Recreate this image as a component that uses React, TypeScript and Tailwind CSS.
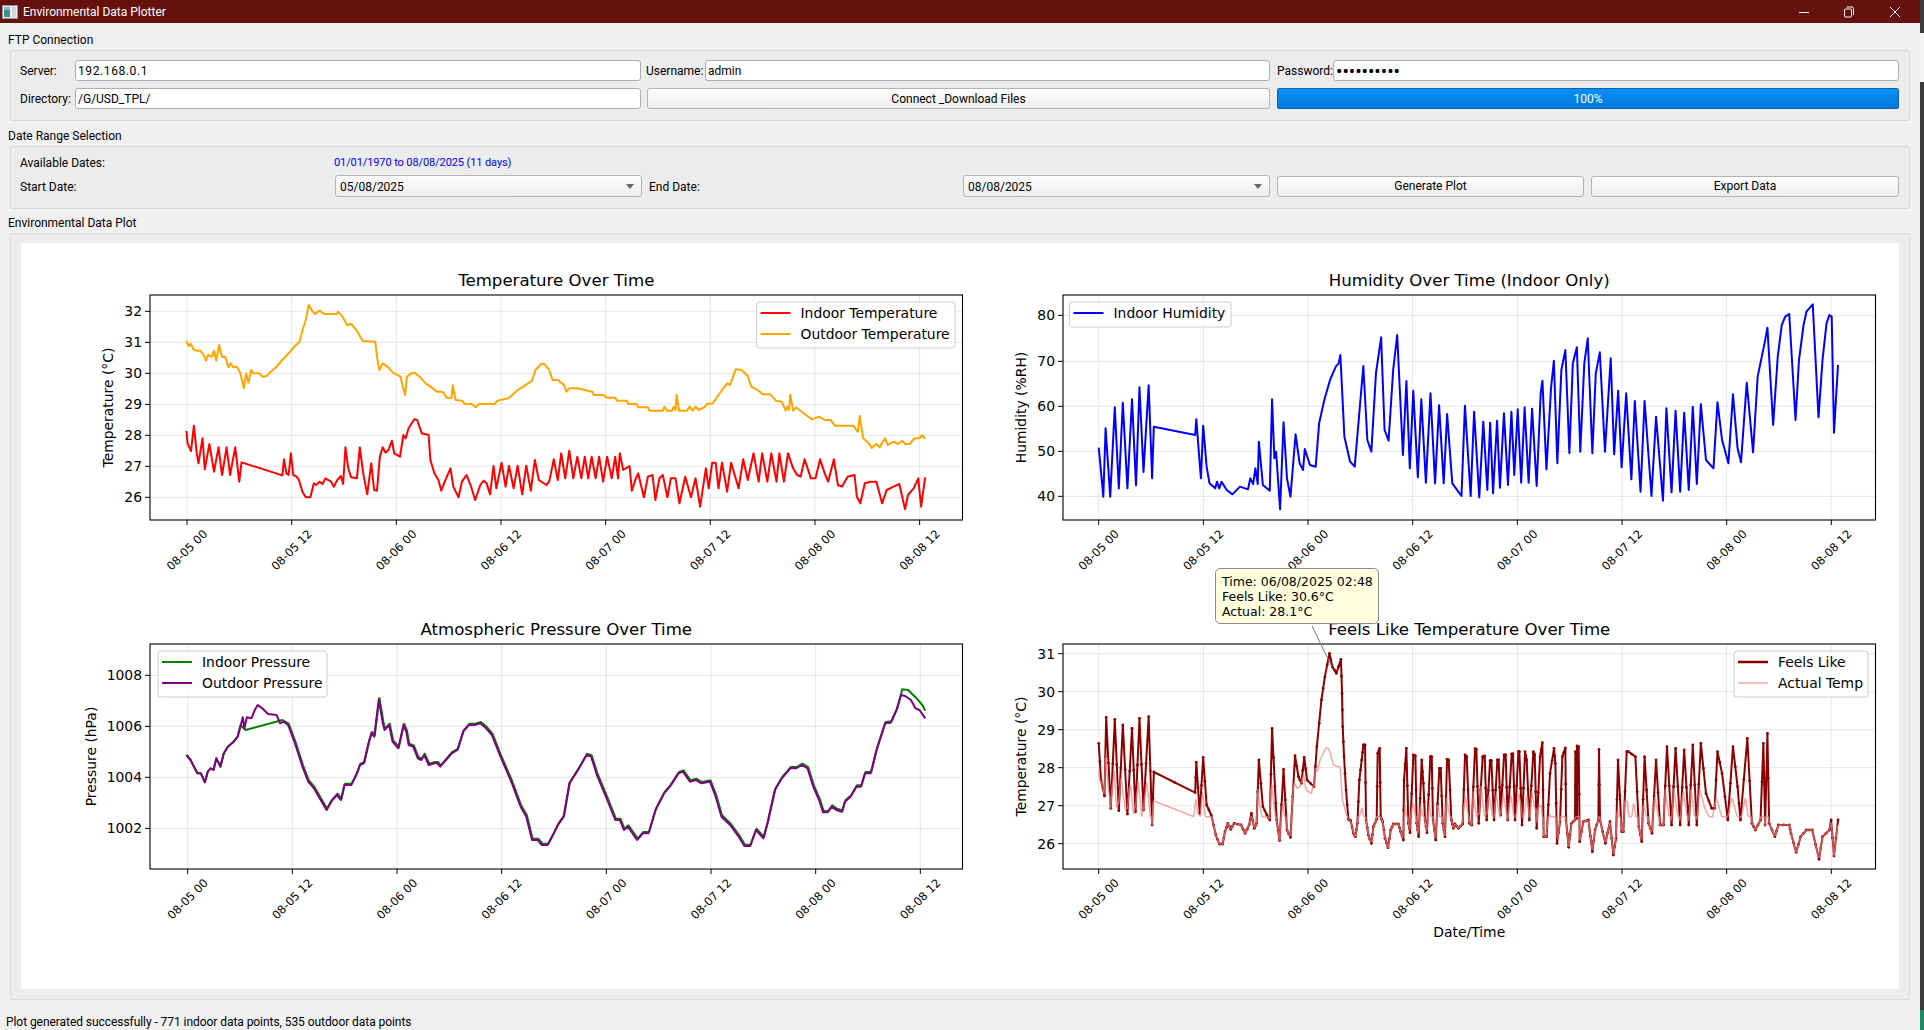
import React from 'react';

const px = 1568 / 900;

const OUTDOOR_TEMP = '168,243 172,258 176,252 180,268 185,272 192,272 198,285 202,302 206,285 212,290 216,272 220,302 225,255 230,290 236,292 241,322 245,310 250,322 256,320 262,340 268,385 272,340 276,368 281,330 285,340 295,340 300,350 308,348 315,335 325,320 335,300 345,282 355,262 365,245 372,200 376,180 381,134 386,150 392,162 400,152 408,162 430,162 432,155 440,170 448,195 455,192 465,212 475,243 497,245 500,290 504,330 510,310 518,320 528,338 541,350 545,380 549,405 552,350 560,340 566,338 575,352 585,370 595,382 604,395 614,395 622,414 630,414 632,376 637,420 648,422 653,432 665,432 672,442 678,432 705,432 710,422 730,414 745,390 755,380 770,362 776,330 786,312 792,312 800,330 806,360 815,360 826,375 830,395 835,385 850,385 875,395 878,405 895,405 900,413 915,413 918,422 935,422 938,432 952,432 955,442 972,442 975,452 998,452 1001,440 1005,452 1014,452 1017,440 1020,450 1022,404 1026,452 1040,452 1045,440 1050,452 1055,440 1060,450 1070,442 1075,432 1085,430 1095,405 1110,370 1115,375 1125,328 1135,330 1146,348 1152,380 1165,392 1172,403 1185,403 1195,422 1205,425 1212,452 1215,440 1218,450 1220,404 1225,452 1230,442 1245,462 1258,478 1270,470 1280,480 1290,480 1298,497 1330,497 1335,510 1338,515 1341,468 1347,535 1358,552 1362,564 1370,552 1376,562 1385,535 1390,555 1400,545 1408,552 1415,542 1420,552 1428,552 1436,535 1445,535 1450,525 1455,537';

const INDOOR_TEMP = '168,513 170,550 176,573 181,497 186,580 189,610 196,535 200,628 208,552 216,635 224,562 230,645 238,562 244,645 253,562 260,665 264,607 335,646 338,598 342,640 346,645 350,580 354,645 360,650 364,660 370,695 376,712 384,712 390,670 394,675 400,665 405,672 410,655 420,665 425,680 430,662 437,648 441,672 445,562 450,625 455,652 465,655 470,562 476,640 483,703 490,610 495,690 500,692 505,590 510,562 515,578 520,570 526,542 530,580 540,590 546,525 550,535 555,505 565,478 570,480 578,520 590,525 593,600 600,640 607,660 612,692 618,665 628,625 633,680 642,712 648,665 656,645 664,680 671,720 680,675 686,662 691,670 697,703 703,618 708,685 717,608 724,680 730,617 738,685 745,617 753,703 760,617 768,692 775,600 782,660 795,675 800,665 808,598 815,660 821,580 828,655 835,572 842,655 849,590 856,655 862,590 868,655 874,590 881,655 887,590 894,665 901,590 909,655 915,590 920,655 923,580 929,630 940,618 944,692 950,660 955,640 965,712 972,650 980,645 985,720 992,655 998,645 1006,712 1012,655 1020,655 1027,730 1037,650 1047,712 1055,655 1063,740 1073,625 1078,685 1084,608 1090,608 1095,685 1101,608 1110,695 1117,608 1130,685 1138,598 1146,660 1156,580 1165,665 1171,580 1180,665 1187,580 1196,665 1201,580 1209,665 1216,580 1225,625 1232,645 1238,650 1245,598 1256,655 1264,655 1272,598 1280,640 1286,665 1296,598 1303,675 1310,680 1320,650 1332,645 1336,710 1342,730 1350,670 1360,665 1370,665 1380,730 1388,690 1400,680 1410,672 1420,748 1425,705 1435,685 1443,655 1448,740 1455,652';

const HUMIDITY = '172,563 180,710 184,505 192,710 200,442 207,685 214,428 222,685 230,418 237,676 243,382 250,636 259,376 265,655 268,500 340,525 342,478 350,655 354,497 360,620 365,670 375,685 378,665 382,685 386,665 395,690 405,703 418,680 432,688 436,655 441,672 445,625 449,672 451,545 458,675 470,692 474,418 478,595 481,575 488,748 494,487 500,655 506,710 515,523 522,610 528,630 531,567 540,615 550,620 556,490 565,420 575,360 585,320 590,310 593,285 600,530 610,605 618,620 633,318 640,540 647,575 655,340 664,232 670,510 677,542 685,330 692,225 702,585 708,363 714,625 720,392 728,652 734,418 742,668 750,400 758,670 765,436 773,670 779,462 788,670 804,708 810,437 820,708 826,455 835,712 842,485 849,690 854,488 859,700 866,482 871,683 878,460 885,675 891,455 896,645 902,448 908,668 914,442 921,668 927,446 935,678 942,400 945,362 952,628 960,385 965,302 971,610 978,330 985,270 992,580 998,310 1005,262 1011,575 1018,310 1024,235 1032,580 1038,340 1045,277 1054,575 1064,295 1070,583 1077,392 1083,622 1091,400 1100,658 1106,423 1116,695 1123,423 1135,708 1143,470 1155,722 1161,445 1170,697 1177,452 1185,695 1192,458 1200,690 1207,440 1214,672 1221,433 1230,600 1243,625 1250,427 1258,540 1269,610 1277,403 1285,565 1291,607 1301,368 1312,577 1320,350 1332,250 1337,203 1347,495 1355,290 1362,195 1368,170 1375,162 1386,480 1392,300 1400,195 1405,155 1416,133 1426,472 1433,300 1440,190 1445,165 1449,170 1453,518 1460,315';

const PRESSURE_OUT = '203,435 210,450 216,470 222,490 228,490 235,517 240,485 245,475 250,480 255,445 262,470 268,430 275,410 285,395 292,380 297,350 301,322 304,355 308,322 316,325 322,300 327,285 335,295 345,312 360,315 366,340 372,335 380,345 392,400 405,470 415,515 425,535 435,565 447,600 455,575 465,555 472,570 478,525 490,525 500,490 505,465 512,460 520,400 525,370 530,380 538,268 545,340 548,360 556,345 562,395 572,415 581,345 586,365 590,405 598,410 606,445 612,450 617,435 625,465 635,460 640,460 645,470 655,450 665,430 675,420 685,365 695,345 705,345 715,340 725,355 735,375 750,440 770,520 785,590 795,620 805,690 815,690 822,705 832,705 840,680 850,645 860,620 870,520 885,480 900,435 908,440 918,495 935,565 950,630 958,630 965,660 972,650 988,690 998,670 1008,670 1020,600 1035,550 1045,530 1060,490 1068,485 1080,515 1090,510 1100,520 1115,515 1125,560 1135,620 1150,645 1165,680 1175,708 1185,708 1195,660 1208,685 1215,640 1228,540 1240,505 1255,475 1265,475 1275,465 1285,475 1295,530 1305,570 1312,607 1320,607 1327,590 1335,600 1345,605 1350,575 1360,560 1370,530 1378,530 1385,490 1395,490 1405,420 1420,340 1430,338 1440,300 1448,255 1455,258 1465,270 1473,295 1480,300 1490,325';

const FEELS_START = '172,550 176,660 182,708 185,472 193,745 200,478 207,752 214,495 222,762 230,505 236,755 243,475 250,750 259,470 265,795 268,636 340,698 342,607 348,760 354,592 360,735 368,765 376,825 382,852 388,852 392,815 397,790 402,808 408,790 420,795 427,820 434,795 438,760 443,805 447,790 451,600 458,740 465,765 470,780 474,505 479,680 482,780 487,842 494,628 500,810 506,832 514,587 520,650 525,670 530,592 535,660 547,680 552,560 560,420 566,350 574,280 579,320 586,340 594,298';

// traced from a closer crop, so it has its own scale
const FEELS_MID = '36,100 38,200 42,290 48,390 55,478 62,482 70,520 76,530 82,490 88,360 95,300 100,255 105,255 108,480 115,525 124,550 130,500 140,478 143,280 149,265 152,470 158,485 165,535 174,563 182,510 190,492 205,492 212,515 220,540 222,360 229,265 235,490 240,518 250,285 256,288 260,490 266,530 275,300 280,370 285,480 291,518 301,290 305,290 309,480 317,540 328,325 332,325 338,490 345,530 351,298 356,300 364,480 370,505 375,492 385,505 398,492 405,285 410,290 418,490 425,495 435,266 439,268 446,490 458,290 464,288 470,480 480,302 484,302 492,480 502,300 506,300 512,465 522,285 527,285 533,480 545,282 549,282 555,480 565,275 568,275 576,495 585,275 590,300 598,480 610,275 614,285 620,505 630,290 637,248 641,530 650,530 660,340 672,265 676,310 681,550 690,485 697,290 706,264 708,480 716,562 724,490 735,480 736,275 741,475 741,258 746,260 749,545 760,485 775,480 787,575 795,510 805,480 807,268 810,480 826,550 840,485 850,585 858,535 864,300 875,515 880,515 890,275 895,275';

const FEELS_END = '1107,590 1113,800 1118,845 1123,590 1130,790 1136,820 1143,600 1150,795 1156,795 1162,560 1170,795 1177,565 1185,795 1192,570 1200,795 1207,555 1214,795 1221,550 1230,700 1240,745 1245,745 1250,575 1258,640 1268,780 1277,560 1285,680 1290,780 1302,535 1310,790 1316,810 1325,780 1330,550 1333,795 1337,520 1340,790 1350,830 1356,795 1375,795 1378,820 1387,877 1395,830 1405,810 1415,810 1427,898 1433,830 1445,810 1448,780 1453,888 1460,780';

type Pt = [number, number];

function parse(s: string): Pt[] {
  return s.split(' ').map((p) => p.split(',').map(Number) as Pt);
}

function interp(pts: Pt[], x: number) {
  for (let i = 1; i < pts.length; i++) {
    if (x <= pts[i][0]) {
      const [x0, y0] = pts[i - 1];
      const [x1, y1] = pts[i];
      return x1 === x0 ? y1 : y0 + ((y1 - y0) * (x - x0)) / (x1 - x0);
    }
  }
  return pts[pts.length - 1][1];
}

const FEELS: Pt[] = [
  ...parse(FEELS_START),
  ...parse(FEELS_MID).map(([x, y]) => [575 + 0.5807 * x, 300 + y] as Pt),
  ...parse(FEELS_END),
];

// actual temp on the feels-like axes is the indoor trace rescaled
const INDOOR_ON_FEELS: Pt[] = parse(INDOOR_TEMP).map(([x, y]) => [x + 3, 851 - (114 * (712 - y)) / 93]);

// below about 26.7 degrees both lines coincide, so pink runs on top of the dark one
const ACTUAL: Pt[] = [];
for (let x = 172; x <= 1460; x += 1.5) {
  const f = interp(FEELS, x);
  const a = interp(INDOOR_ON_FEELS, x);
  ACTUAL.push([x, Math.max(f, Math.min(a, 770))]);
}

// markers sit between the traced points as well
const FEELS_DOTS: Pt[] = FEELS.flatMap((p, i) => {
  if (i === 0) return [p];
  const q = FEELS[i - 1];
  return [[(p[0] + q[0]) / 2, (p[1] + q[1]) / 2] as Pt, p];
});

// indoor pressure follows outdoor closely, with the logging gap bridged
const PRESSURE_IN: Pt[] = [
  ...parse(PRESSURE_OUT).filter(([x]) => x <= 292),
  [297, 345],
  [306, 360],
  [370, 330],
  ...parse(PRESSURE_OUT)
    .filter(([x]) => x > 375 && x < 1445)
    .map(([x, y]) => [x + 1, y - 4] as Pt),
  [1450, 238],
  [1460, 240],
  [1475, 265],
  [1485, 285],
  [1490, 302],
];

interface Series {
  points: Pt[];
  color: string;
  width: number;
  opacity?: number;
  dots?: Pt[];
}

interface LegendProps {
  x: number;
  y: number;
  w: number;
  items: { label: string; color: string; width: number; opacity?: number }[];
}

interface ChartProps {
  title: string;
  ylabel: string;
  xlabel?: string;
  height: number;
  left: number;
  ylabelX: number;
  firstTick: number;
  ox: number;
  oy: number;
  yTicks: { label: string; z: number }[];
  series: Series[];
  legend: LegendProps;
  children?: React.ReactNode;
}

const TICKS = ['08-05 00', '08-05 12', '08-06 00', '08-06 12', '08-07 00', '08-07 12', '08-08 00', '08-08 12'];
const TOP = 52;
const BOTTOM = 277;
const WIDTH = 812.5;

function Chart({ title, ylabel, xlabel, height, left, ylabelX, firstTick, ox, oy, yTicks, series, legend, children }: ChartProps) {
  const tx = (z: number) => ox + z / px;
  const ty = (z: number) => oy + z / 3;
  const mid = left + WIDTH / 2;
  return (
    <svg width={939} height={height} className="block overflow-visible font-['DejaVu_Sans',sans-serif]">
      <text x={mid} y={43} textAnchor="middle" fontSize={16.6} fill="#000">{title}</text>

      {TICKS.map((t, i) => {
        const x = firstTick + i * 104.66;
        return (
          <g key={t}>
            <line x1={x} x2={x} y1={TOP} y2={BOTTOM} stroke="#b0b0b0" strokeOpacity={0.3} />
            <line x1={x} x2={x} y1={BOTTOM} y2={BOTTOM + 5} stroke="#000" />
            <text x={x} y={BOTTOM + 30} fontSize={11.5} textAnchor="middle" dominantBaseline="central" transform={`rotate(-45 ${x} ${BOTTOM + 30})`} fill="#000">{t}</text>
          </g>
        );
      })}

      {yTicks.map((t) => (
        <g key={t.label}>
          <line x1={left} x2={left + WIDTH} y1={ty(t.z)} y2={ty(t.z)} stroke="#b0b0b0" strokeOpacity={0.3} />
          <line x1={left - 5} x2={left} y1={ty(t.z)} y2={ty(t.z)} stroke="#000" />
          <text x={left - 8} y={ty(t.z)} fontSize={13.9} textAnchor="end" dominantBaseline="central" fill="#000">{t.label}</text>
        </g>
      ))}

      {series.map((s, i) => (
        <g key={i}>
          <polyline
            points={s.points.map(([x, y]) => `${tx(x)},${ty(y)}`).join(' ')}
            fill="none"
            stroke={s.color}
            strokeWidth={s.width}
            strokeOpacity={s.opacity ?? 1}
            strokeLinejoin="round"
          />
          {s.dots && s.dots.map(([x, y], j) => <circle key={j} cx={tx(x)} cy={ty(y)} r={1.4} fill={s.color} />)}
        </g>
      ))}

      <rect x={left} y={TOP} width={WIDTH} height={BOTTOM - TOP} fill="none" stroke="#000" strokeWidth={1.1} />

      <text x={ylabelX} y={(TOP + BOTTOM) / 2} fontSize={13.9} textAnchor="middle" dominantBaseline="central" transform={`rotate(-90 ${ylabelX} ${(TOP + BOTTOM) / 2})`} fill="#000">{ylabel}</text>
      {xlabel && <text x={mid} y={BOTTOM + 68} fontSize={13.9} textAnchor="middle" fill="#000">{xlabel}</text>}

      <rect x={legend.x} y={legend.y} width={legend.w} height={legend.items.length * 21 + 4} rx={3} fill="#fff" fillOpacity={0.8} stroke="#ccc" />
      {legend.items.map((it, i) => {
        const ly = legend.y + 11 + i * 21;
        return (
          <g key={it.label}>
            <line x1={legend.x + 4} x2={legend.x + 34} y1={ly} y2={ly} stroke={it.color} strokeWidth={it.width} strokeOpacity={it.opacity ?? 1} />
            <text x={legend.x + 44} y={ly} fontSize={13.9} dominantBaseline="central" fill="#000">{it.label}</text>
          </g>
        );
      })}
      {children}
    </svg>
  );
}

function GroupBox({ title, labelCls, className, children }: { title: string; labelCls: string; className: string; children: React.ReactNode }) {
  return (
    <div className="flex flex-col">
      <div className={`flex items-center -ml-[2px] ${labelCls}`}>{title}</div>
      <div className={`border border-[#dadada] bg-[#ececec] rounded-[2px] ${className}`}>{children}</div>
    </div>
  );
}

const inputCls = 'h-[21px] w-full min-w-0 bg-white border border-[#adadad] rounded-[3px] px-[2px] pt-[1px] outline-none text-[12px] text-black';
const buttonCls = 'h-[21px] bg-gradient-to-b from-[#fdfdfd] to-[#ededed] border border-[#b4b4b4] rounded-[3px] flex items-center justify-center text-[12px] text-black';

function Combo({ value }: { value: string }) {
  return (
    <div className="h-[22px] w-[307px] bg-gradient-to-b from-[#fdfdfd] to-[#ededed] border border-[#b4b4b4] rounded-[3px] flex items-center justify-between pl-[4px] pr-[7px] pt-[1px]">
      <span>{value}</span>
      <span className="w-0 h-0 border-l-[4px] border-r-[4px] border-t-[5px] border-l-transparent border-r-transparent border-t-[#666]" />
    </div>
  );
}

export default function App() {
  return (
    <div className="flex w-[1924px] h-[1030px] overflow-hidden font-['Roboto',sans-serif] text-[12px] text-black">
      <div className="w-[1920px] h-full flex flex-col bg-[#f0f0f0]">
        <div className="h-[23px] shrink-0 bg-[#65110d] flex items-center text-white">
          <svg width="16" height="16" viewBox="0 0 16 16" className="ml-[2px]">
            <rect x="0.5" y="1.5" width="15" height="13" fill="#e9eef0" stroke="#8a9aa0" />
            <rect x="2" y="3" width="6" height="10" fill="#3f8f86" />
            <rect x="2" y="3" width="6" height="3" fill="#8fb0c8" />
            <rect x="10" y="3" width="4" height="10" fill="#cfd8d8" />
          </svg>
          <span className="ml-[5px]">Environmental Data Plotter</span>
          <div className="ml-auto flex items-center">
            <svg width="12" height="12" viewBox="0 0 12 12" className="mr-[33px]"><path d="M1 6.5h10" stroke="#fff" strokeWidth="1" /></svg>
            <svg width="12" height="12" viewBox="0 0 12 12" className="mr-[34px]" fill="none" stroke="#fff"><rect x="1.5" y="3" width="7" height="8" rx="1" /><path d="M3.5 1h5.5a1.5 1.5 0 0 1 1.5 1.5V9" /></svg>
            <svg width="12" height="12" viewBox="0 0 12 12" className="mr-[19px]" stroke="#fff"><path d="M1 1l10 10M11 1L1 11" /></svg>
          </div>
        </div>

        <div className="flex flex-col px-[10px]">
          <GroupBox title="FTP Connection" labelCls="h-[27px] pt-[6px]" className="h-[71px] pl-[9px] pt-[9px]">
            <div className="grid grid-cols-[55px_566px_64px_565px_63px_566px] grid-rows-[21px_21px] gap-y-[7px] items-center">
              <span className="pt-[1px]">Server:</span>
              <input readOnly value="192.168.0.1" className={`${inputCls} tracking-[0.6px]`} />
              <span className="pl-[5px] pt-[1px]">Username:</span>
              <input readOnly value="admin" className={inputCls} />
              <span className="pl-[7px] pt-[1px]">Password:</span>
              <input readOnly type="password" value="0123456789" className={`${inputCls} font-['Noto_Sans',sans-serif] text-[17px]`} />
              <span className="pt-[1px]">Directory:</span>
              <input readOnly value="/G/USD_TPL/" className={inputCls} />
              <button className={`${buttonCls} col-span-2 ml-[6px]`}>Connect _Download Files</button>
              <div className="col-span-2 ml-[7px] h-[21px] rounded-[2px] border border-[#0a65ad] bg-gradient-to-b from-[#0a90fa] to-[#0078d7] text-white flex items-center justify-center">100%</div>
            </div>
          </GroupBox>

          <GroupBox title="Date Range Selection" labelCls="h-[25px] pt-[4px]" className="h-[63px] pl-[9px] pt-[8px] flex flex-col gap-[4px]">
            <div className="flex items-center h-[16px]">
              <span className="w-[314px]">Available Dates:</span>
              <span className="text-[#0000ff] text-[11px] tracking-[-0.1px]">01/01/1970 to 08/08/2025 (11 days)</span>
            </div>
            <div className="flex items-center">
              <span className="w-[315px] pt-[1px]">Start Date:</span>
              <Combo value="05/08/2025" />
              <span className="w-[321px] pl-[7px] pt-[1px]">End Date:</span>
              <Combo value="08/08/2025" />
              <button className={`${buttonCls} ml-[7px] w-[307px]`}>Generate Plot</button>
              <button className={`${buttonCls} ml-[7px] w-[308px]`}>Export Data</button>
            </div>
          </GroupBox>

          <GroupBox title="Environmental Data Plot" labelCls="h-[24px] pt-[4px]" className="h-[767px] pl-[10px] pt-[9px]">
            <div className="relative w-[1878px] h-[746px] bg-white grid grid-cols-[939px_939px] grid-rows-[349px_397px]">
              <Chart
                title="Temperature Over Time"
                ylabel="Temperature (°C)"
                height={349}
                left={129}
                ylabelX={87}
                firstTick={166}
                ox={69}
                oy={17}
                yTicks={[{ label: '26', z: 712 }, { label: '27', z: 619 }, { label: '28', z: 526 }, { label: '29', z: 433 }, { label: '30', z: 340 }, { label: '31', z: 247 }, { label: '32', z: 154 }]}
                series={[
                  { points: parse(INDOOR_TEMP), color: '#ff0000', width: 2 },
                  { points: parse(OUTDOOR_TEMP), color: '#ffa500', width: 2 },
                ]}
                legend={{ x: 735.5, y: 59, w: 198.5, items: [{ label: 'Indoor Temperature', color: '#ff0000', width: 2 }, { label: 'Outdoor Temperature', color: '#ffa500', width: 2 }] }}
              />
              <Chart
                title="Humidity Over Time (Indoor Only)"
                ylabel="Humidity (%RH)"
                height={349}
                left={103}
                ylabelX={61}
                firstTick={138.7}
                ox={40}
                oy={17}
                yTicks={[{ label: '40', z: 709 }, { label: '50', z: 574 }, { label: '60', z: 439 }, { label: '70', z: 304 }, { label: '80', z: 166 }]}
                series={[{ points: parse(HUMIDITY), color: '#0000ff', width: 2 }]}
                legend={{ x: 109.5, y: 59, w: 161.5, items: [{ label: 'Indoor Humidity', color: '#0000ff', width: 2 }] }}
              />
              <Chart
                title="Atmospheric Pressure Over Time"
                ylabel="Pressure (hPa)"
                height={397}
                left={129}
                ylabelX={70}
                firstTick={166.7}
                ox={49}
                oy={18}
                yTicks={[{ label: '1002', z: 655 }, { label: '1004', z: 502 }, { label: '1006', z: 349 }, { label: '1008', z: 196 }]}
                series={[
                  { points: PRESSURE_IN, color: '#008000', width: 2 },
                  { points: parse(PRESSURE_OUT), color: '#800080', width: 2 },
                ]}
                legend={{ x: 137, y: 59, w: 169, items: [{ label: 'Indoor Pressure', color: '#008000', width: 2 }, { label: 'Outdoor Pressure', color: '#800080', width: 2 }] }}
              />
              <Chart
                title="Feels Like Temperature Over Time"
                ylabel="Temperature (°C)"
                xlabel="Date/Time"
                height={397}
                left={103}
                ylabelX={61}
                firstTick={138.7}
                ox={40}
                oy={-32}
                yTicks={[{ label: '26', z: 851 }, { label: '27', z: 737 }, { label: '28', z: 623 }, { label: '29', z: 509 }, { label: '30', z: 395 }, { label: '31', z: 281 }]}
                series={[
                  { points: FEELS, color: '#8b0000', width: 2, dots: FEELS_DOTS },
                  { points: ACTUAL, color: '#f08080', width: 1.5, opacity: 0.7 },
                ]}
                legend={{ x: 774, y: 59, w: 134, items: [{ label: 'Feels Like', color: '#8b0000', width: 2.5 }, { label: 'Actual Temp', color: '#f08080', width: 1.5, opacity: 0.7 }] }}
              >
                <line x1={352} y1={34} x2={372} y2={75} stroke="#777" strokeWidth={1} />
              </Chart>

              <div className="absolute left-[1194px] top-[325px] w-[164px] h-[56px] rounded-[5px] border-[1.5px] border-[#8a8a8a] bg-[#ffffe0] pl-[6px] pt-[5px] font-['DejaVu_Sans',sans-serif] text-[12.5px] leading-[15px] whitespace-nowrap">
                <div>Time: 06/08/2025 02:48</div>
                <div>Feels Like: 30.6°C</div>
                <div>Actual: 28.1°C</div>
              </div>
            </div>
          </GroupBox>

          <div className="h-[30px] -ml-[4px] pt-[14px] leading-[16px] whitespace-nowrap tracking-[-0.06px]">Plot generated successfully - 771 indoor data points, 535 outdoor data points</div>
        </div>
      </div>

      <div className="w-[4px] h-full flex flex-col">
        <div className="h-[33px] bg-[#3b3b3b]" />
        <div className="h-[49px] bg-[#f4f4f4]" />
        <div className="flex-1 bg-[#3b3b3b]" />
        <div className="h-[20px] bg-[#1f8a63]" />
      </div>
    </div>
  );
}
